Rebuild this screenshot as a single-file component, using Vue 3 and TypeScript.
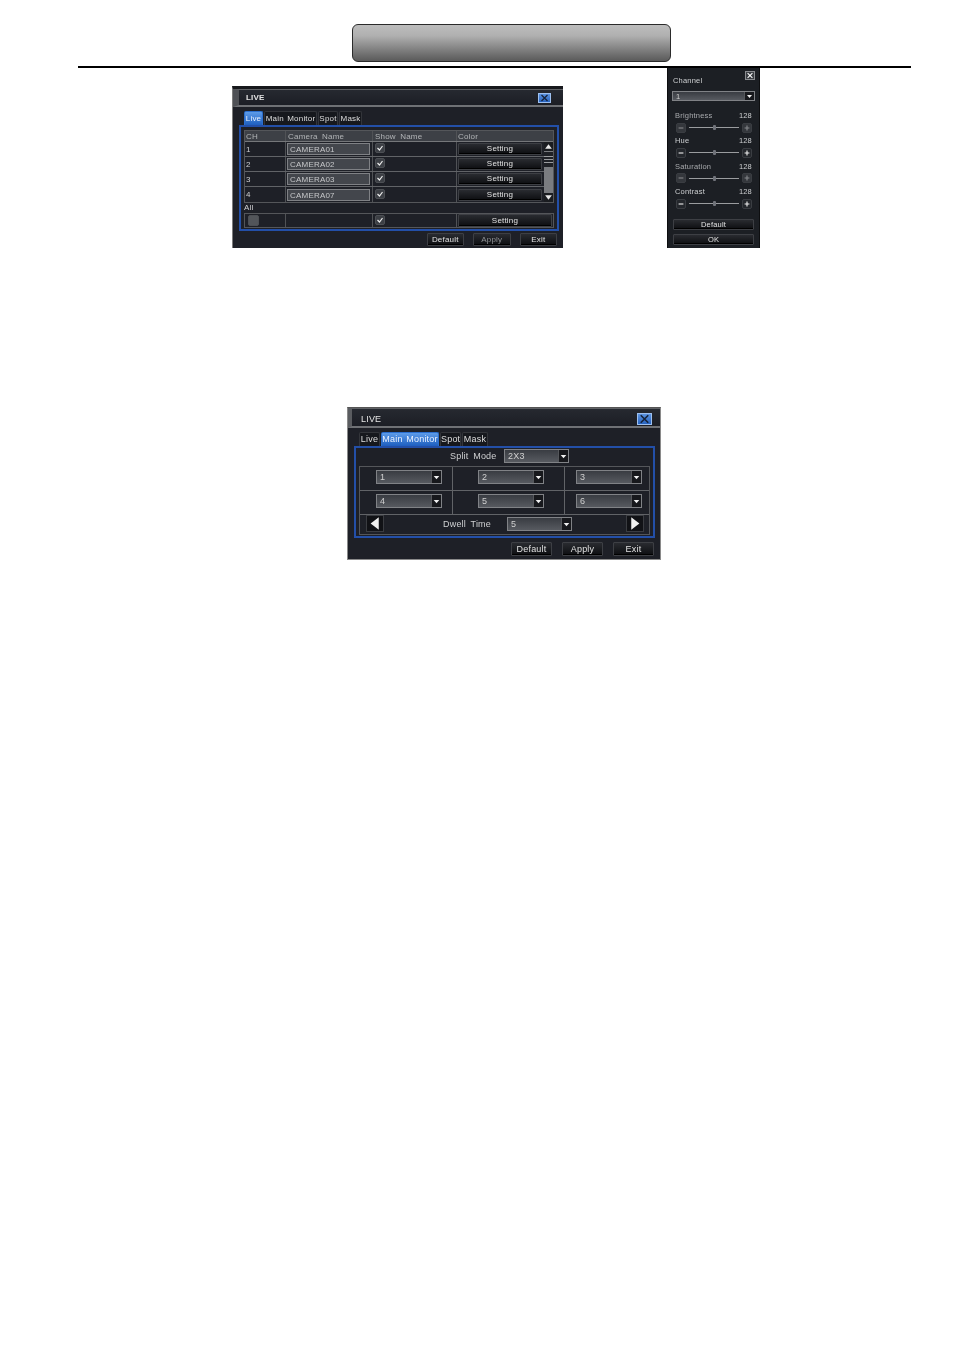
<script setup lang="ts">
const tabs1 = [
  { label: 'Live', cls: 'w-live', on: true },
  { label: 'Main Monitor', cls: 'w-main', on: false },
  { label: 'Spot', cls: 'w-spot', on: false },
  { label: 'Mask', cls: 'w-mask', on: false },
]
const tabs2 = [
  { label: 'Live', cls: 'x-live', on: false },
  { label: 'Main Monitor', cls: 'x-main', on: true },
  { label: 'Spot', cls: 'x-spot', on: false },
  { label: 'Mask', cls: 'x-mask', on: false },
]
const cams = [
  { ch: '1', name: 'CAMERA01' },
  { ch: '2', name: 'CAMERA02' },
  { ch: '3', name: 'CAMERA03' },
  { ch: '4', name: 'CAMERA07' },
]
const sliders = [
  { name: 'Brightness', dim: true },
  { name: 'Hue', dim: false },
  { name: 'Saturation', dim: true },
  { name: 'Contrast', dim: false },
]
const splitRows = [['1', '2', '3'], ['4', '5', '6']]
</script>

<template>
  <div class="page">
    <div class="banner"></div>
    <div class="rule"></div>

    <div class="fig-row">
      <section class="dialog d1">
        <header class="title t1">
          <span>LIVE</span>
          <i class="close"><svg viewBox="0 0 10 8"><path d="M2 1l6 6M8 1L2 7" /></svg></i>
        </header>
        <nav class="tabs tabs1">
          <span v-for="t in tabs1" :key="t.label" class="tab" :class="[t.cls, { on: t.on }]">{{ t.label }}</span>
        </nav>
        <div class="frame f1">
          <div class="table">
            <div class="row head">
              <span class="c1">CH</span><span class="c2 pad">Camera Name</span><span class="c3 pad">Show Name</span><span class="c4">Color</span>
            </div>
            <div class="scroll-wrap">
              <div class="rows">
                <div v-for="c in cams" :key="c.ch" class="row body-row">
                  <span class="c1">{{ c.ch }}</span>
                  <span class="c2"><b class="input">{{ c.name }}</b></span>
                  <span class="c3"><i class="check"><svg viewBox="0 0 8 8"><path d="M1.5 4l2 2 3-4" /></svg></i></span>
                  <span class="c4a"><button class="btn setting">Setting</button></span>
                </div>
              </div>
              <div class="scrollbar">
                <i class="sb-btn"><svg viewBox="0 0 8 8"><path d="M4 2l3 4H1z" /></svg></i>
                <i class="sb-thumb"></i>
                <i class="sb-track"></i>
                <i class="sb-btn"><svg viewBox="0 0 8 8"><path d="M4 6L1 2h6z" /></svg></i>
              </div>
            </div>
          </div>
          <div class="all-label">All</div>
          <div class="table all-table">
            <div class="row all-row">
              <span class="c1"><i class="check blank"></i></span>
              <span class="c2"></span>
              <span class="c3"><i class="check"><svg viewBox="0 0 8 8"><path d="M1.5 4l2 2 3-4" /></svg></i></span>
              <span class="c4b"><button class="btn setting wide">Setting</button></span>
            </div>
          </div>
        </div>
        <footer class="actions a1">
          <button class="btn act1">Default</button>
          <button class="btn act1 dim">Apply</button>
          <button class="btn act1">Exit</button>
        </footer>
      </section>

      <aside class="panel">
        <div class="panel-top">
          <span class="channel">Channel</span>
          <i class="panel-x"><svg viewBox="0 0 10 8"><path d="M2 1l6 6M8 1L2 7" /></svg></i>
        </div>
        <div class="select panel-select">
          <span>1</span>
          <i class="arrow"><svg viewBox="0 0 8 8"><path d="M1.5 3h5L4 6z" /></svg></i>
        </div>
        <div class="sliders">
          <div v-for="s in sliders" :key="s.name" class="slider" :class="{ dim: s.dim }">
            <div class="slider-label"><span>{{ s.name }}</span><span>128</span></div>
            <div class="slider-track">
              <i class="pm"><svg viewBox="0 0 10 8"><path d="M2 4h6" /></svg></i>
              <i class="line"><i class="thumb"></i></i>
              <i class="pm"><svg viewBox="0 0 10 8"><path d="M2 4h6M5 1v6" /></svg></i>
            </div>
          </div>
        </div>
        <button class="btn panel-btn first">Default</button>
        <button class="btn panel-btn">OK</button>
      </aside>
    </div>

    <section class="dialog d2">
      <header class="title t2">
        <span>LIVE</span>
        <i class="close big"><svg viewBox="0 0 10 8"><path d="M2 1l6 6M8 1L2 7" /></svg></i>
      </header>
      <nav class="tabs tabs2">
        <span v-for="t in tabs2" :key="t.label" class="tab" :class="[t.cls, { on: t.on }]">{{ t.label }}</span>
      </nav>
      <div class="frame f2">
        <div class="split-mode">
          <span class="split-label">Split Mode</span>
          <div class="select sel-mode"><span>2X3</span><i class="arrow"><svg viewBox="0 0 8 8"><path d="M1.5 3h5L4 6z" /></svg></i></div>
        </div>
        <div class="grid">
          <div v-for="(r, i) in splitRows" :key="i" class="grid-row">
            <div v-for="(v, j) in r" :key="v" class="cell" :class="'col' + j">
              <div class="select sel-cell"><span>{{ v }}</span><i class="arrow"><svg viewBox="0 0 8 8"><path d="M1.5 3h5L4 6z" /></svg></i></div>
            </div>
          </div>
          <div class="dwell">
            <i class="nav-btn"><svg viewBox="0 0 10 12"><path d="M8 1v10L1.5 6z" /></svg></i>
            <span class="dwell-label">Dwell Time</span>
            <div class="select sel-dwell"><span>5</span><i class="arrow"><svg viewBox="0 0 8 8"><path d="M1.5 3h5L4 6z" /></svg></i></div>
            <i class="nav-btn right"><svg viewBox="0 0 10 12"><path d="M2 1v10L8.5 6z" /></svg></i>
          </div>
        </div>
      </div>
      <footer class="actions a2">
        <button class="btn act2">Default</button>
        <button class="btn act2">Apply</button>
        <button class="btn act2">Exit</button>
      </footer>
    </section>
  </div>
</template>

<style>
html, body { margin: 0; background: #fff; }
</style>

<style scoped>
.page {
  width: 954px;
  height: 1350px;
  background: #fff;
  overflow: hidden;
  font-family: "Liberation Sans", Arial, sans-serif;
  box-sizing: border-box;
  padding-top: 24px;
}
.page * { box-sizing: border-box; }
i { display: block; font-style: normal; }
svg { display: block; width: 100%; height: 100%; }

.banner {
  width: 319px;
  height: 38px;
  margin-left: 352px;
  border: 1.5px solid #2b2b2b;
  border-radius: 6px;
  background: linear-gradient(#bdbdbd 0%, #b0b0b0 30%, #7e7e7e 70%, #5a5a5a 100%);
}
.rule { width: 833px; height: 2px; margin: 4px 0 0 78px; background: #000; }

.fig-row { display: flex; align-items: flex-end; padding-left: 232px; gap: 104px; }

/* dialogs */
.dialog {
  background: #1e2027;
  color: #cfd0d2;
  font-size: 8px;
  letter-spacing: .2px;
  word-spacing: 2px;
  white-space: pre;
  display: flex;
  flex-direction: column;
  filter: blur(.45px);
}
.d1 {
  width: 331px;
  height: 162px;
  border-left: 1px solid #7d7d7d;
  border-top: 3px solid #17181c;
}
.d2 {
  width: 314px;
  height: 153px;
  margin: 159px 0 0 347px;
  border-left: 1px solid #8a8a8a;
  border-right: 1px solid #8a8a8a;
  border-bottom: 1px solid #8a8a8a;
  border-top: 1px solid #555;
  font-size: 9px;
}
.title {
  display: flex;
  align-items: center;
  justify-content: space-between;
  background: linear-gradient(#262930, #1c1e25);
  border-top: 1px solid #5f6165;
  border-bottom: 2px solid #6f7175;
  color: #e4e4e4;
}
.t1 { height: 18px; padding: 0 12px 0 7px; border-left: 6px solid #4f5156; font-weight: 700; font-size: 8px; }
.t2 { height: 20px; padding: 3px 8px 0 9px; border-left: 4px solid #5a5c60; font-size: 9px; }
.close {
  width: 13px;
  height: 10px;
  background: linear-gradient(#5b93e0, #2763c0);
  border: 1px solid #9ec0ef;
}
.close.big { width: 15px; height: 12px; }
.close path, .panel-x path { stroke: #16233a; stroke-width: 1.3; fill: none; }

.tabs { display: flex; align-items: flex-end; gap: 1px; padding-left: 11px; }
.tabs1 { height: 17px; margin-top: 1px; }
.tabs2 { height: 18px; }
.tab {
  height: 14px;
  line-height: 13px;
  text-align: center;
  background: #16181d;
  border: 1px solid #33353a;
  border-bottom: 0;
  border-radius: 2px 2px 0 0;
  color: #dedede;
  word-spacing: 1px;
}
.tab.on { background: linear-gradient(#5d9be8, #1e5fc0); color: #eaf2ff; border-color: #2b6fd0; }
.w-live { width: 19px; } .w-main { width: 53px; } .w-spot { width: 20px; } .w-mask { width: 23px; }
.x-live { width: 21px; } .x-main { width: 58px; } .x-spot { width: 21px; } .x-mask { width: 26px; }

.frame { border: 2px solid #234fa8; }
.f1 { width: 320px; height: 106px; margin-left: 6px; padding: 3px 3px 0; }
.f2 { width: 301px; height: 92px; margin-left: 6px; padding: 0 3px; }

/* table */
.table { width: 310px; border: 1px solid #54565a; }
.row { display: flex; }
.row > span { display: flex; align-items: center; border-right: 1px solid #505256; padding-left: 1px; }
.row > span:last-child { border-right: 0; }
.head { height: 11px; background: #3d4046; color: #b2b4b7; border-bottom: 1px solid #75777a; }
.c1 { width: 41px; }
.c2 { width: 87px; }
.c3 { width: 84px; }
.c4 { flex: 1; }
.pad { padding-left: 2px !important; }
.c4a { width: 87px; }
.c4b { flex: 1; }
.scroll-wrap { display: flex; }
.rows { width: 299px; }
.body-row { height: 15px; border-bottom: 1px solid #616367; }
.body-row:last-child { border-bottom: 0; }
.input {
  display: block;
  font-weight: 400;
  width: 83px;
  height: 12px;
  line-height: 11px;
  padding-left: 2px;
  background: #43464c;
  border: 1px solid #7f8185;
  color: #c6c7c9;
}
.check {
  width: 10px;
  height: 10px;
  margin: 0 0 2px 1px;
  background: #3c3f45;
  border: 1px solid #4c4f54;
  border-radius: 2px;
}
.check path { fill: none; stroke: #ececec; stroke-width: 1.2; }
.check.blank { width: 11px; height: 11px; margin: 0 0 1px 2px; background: #52555a; }
.btn {
  display: block;
  margin: 0;
  padding: 0;
  font: inherit;
  letter-spacing: inherit;
  color: #e0e0e0;
  background: linear-gradient(#292b30, #0d0e11);
  border: 1px solid #3d3f44;
  border-radius: 1px;
  box-shadow: inset 0 -1px 0 #000;
}
.setting { width: 84px; height: 12px; line-height: 10px; }
.setting.wide { width: 94px; height: 13px; }
.scrollbar { width: 9px; display: flex; flex-direction: column; background: #7a7c80; }
.sb-btn { height: 9px; background: #1a1c20; }
.sb-btn path { fill: #e8e8e8; }
.sb-thumb { height: 15px; margin-top: 1px; background: linear-gradient(#1f2126 0 4px, #9a9c9f 4px 5px, #1f2126 5px 7px, #9a9c9f 7px 8px, #1f2126 8px 10px, #9a9c9f 10px 11px, #1f2126 11px); }
.sb-track { flex: 1; }
.all-label { height: 10px; line-height: 10px; color: #cfd0d2; }
.all-row { height: 13px; }
.actions { display: flex; justify-content: flex-end; }
.a1 { margin-top: 2px; padding-right: 6px; gap: 9px; }
.act1 { width: 37.5px; height: 13px; line-height: 11px; }
.act1.dim { color: #8f9194; }
.a2 { margin-top: 4px; padding-right: 6px; gap: 10px; }
.act2 { width: 41px; height: 14px; line-height: 11px; }

/* panel */
.panel {
  width: 93px;
  height: 180px;
  background: #1c1f24;
  border-left: 1px solid #0d0e10;
  border-right: 1px solid #0d0e10;
  color: #cdcfd1;
  font-size: 7.5px;
  letter-spacing: .2px;
  white-space: pre;
  display: flex;
  flex-direction: column;
  padding: 3px 4px 0;
  filter: blur(.4px);
}
.panel-top { height: 20px; display: flex; justify-content: space-between; align-items: flex-start; }
.channel { margin: 5px 0 0 1px; }
.panel-x { width: 10px; height: 9px; background: #3a3d42; border: 1px solid #8a8c90; }
.panel-x path { stroke: #fff; }
.select {
  display: flex;
  align-items: center;
  justify-content: space-between;
  background: linear-gradient(#393c42, #575a60);
  border: 1px solid #808286;
  color: #d0d0d0;
  padding-left: 3px;
}
.arrow { width: 10px; height: 100%; background: #17181c; border-left: 1px solid #55575b; }
.arrow path { fill: #f0f0f0; }
.panel-select { height: 10px; width: 83px; }
.sliders { margin-top: 9px; display: flex; flex-direction: column; gap: 1.4px; padding: 0 3px; }
.slider { height: 24px; }
.slider-label { display: flex; justify-content: space-between; height: 11px; line-height: 11px; }
.slider.dim .slider-label span:first-child { color: #a8aaad; }
.slider-track { display: flex; align-items: center; height: 13px; gap: 3px; padding-left: 1px; }
.pm { width: 10px; height: 10px; background: #24272c; border: 1px solid #3a3d42; border-radius: 2px; flex: none; }
.pm path { stroke: #eee; stroke-width: 1.4; fill: none; }
.slider.dim .pm { background: #34373c; }
.slider.dim .pm path { stroke: #85878b; }
.line { flex: 1; height: 1px; background: #9a9c9f; position: relative; }
.thumb { position: absolute; left: 50%; top: -2px; width: 3px; height: 5px; margin-left: -1px; background: #70737a; border-radius: 1px; }
.panel-btn { width: 81px; height: 11px; line-height: 9px; margin: 4px 0 0 1px; }
.panel-btn.first { margin-top: 9px; }

/* split */
.split-mode { display: flex; align-items: center; height: 15px; margin-bottom: 3px; padding-left: 91px; }
.split-label { width: 45px; flex: none; margin-right: 9px; }
.sel-mode { width: 65px; height: 14px; }
.grid { border: 1px solid #54565a; width: 291px; height: 69px; }
.grid-row { display: flex; height: 24px; border-bottom: 1px solid #616367; }
.cell { display: flex; align-items: center; border-right: 1px solid #616367; padding-bottom: 3px; }
.cell:last-child { border-right: 0; }
.col0 { width: 93px; padding-left: 16px; }
.col1 { width: 112px; padding-left: 25px; }
.col2 { flex: 1; padding-left: 11px; }
.sel-cell { width: 66px; height: 14px; }
.dwell { display: flex; align-items: center; height: 19px; padding: 0 5px 2px 6px; }
.nav-btn { width: 18px; height: 17px; background: #111216; border: 1px solid #3a3c41; flex: none; }
.nav-btn path { fill: #f0f0f0; }
.dwell-label { margin-left: 59px; width: 64px; flex: none; }
.sel-dwell { width: 65px; height: 14px; }
.nav-btn.right { margin-left: 54px; }
</style>
